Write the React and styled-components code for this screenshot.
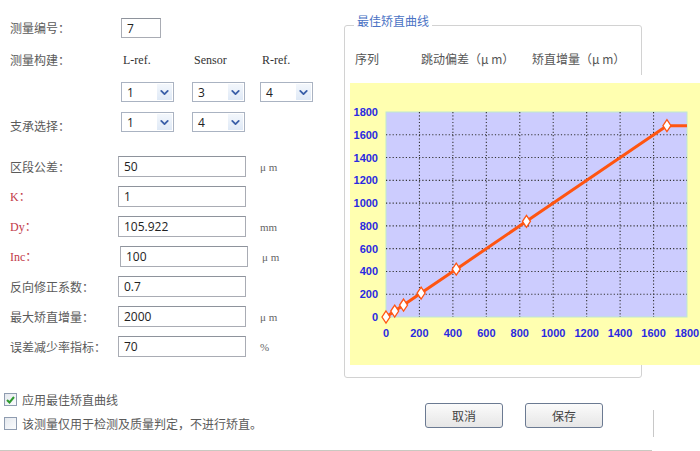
import React from 'react';
import styled, { createGlobalStyle } from 'styled-components';
import { ChevronDown } from 'lucide-react';

const GlobalStyle = createGlobalStyle`
  html, body { margin: 0; padding: 0; background: #fff; }
  body { font-family: "Noto Sans CJK SC", "Liberation Sans", sans-serif; }
`;

const Screen = styled.div`
  width: 700px;
  height: 451px;
  overflow: hidden;
  background: #fff;
  font-family: "Noto Sans CJK SC", "Liberation Sans", sans-serif;
`;

const Main = styled.div`
  display: flex;
  height: 380px;
`;

const Form = styled.div`
  width: 344px;
  flex: none;
  padding-left: 10px;
  box-sizing: border-box;
  display: flex;
  flex-direction: column;
`;

const Row = styled.div`
  display: flex;
  align-items: center;
  height: ${p => p.$h || 21}px;
  margin-top: ${p => p.$mt || 0}px;
`;

const Label = styled.div`
  width: 108px;
  flex: none;
  font-size: 12px;
  line-height: 16px;
  color: ${p => (p.$red ? '#c23a48' : '#5a5a5a')};
  font-family: ${p => (p.$latin ? '"Liberation Serif", "Noto Sans CJK SC", serif' : '"Noto Sans CJK SC", sans-serif')};
  padding-top: ${p => p.$shift || 0}px;
`;

const Cells = styled.div`
  display: grid;
  grid-template-columns: 71px 68px 53px;
  margin-left: 3px;
  align-items: center;
`;

const ColHead = styled.div`
  font-family: "Liberation Serif", serif;
  font-size: 12px;
  color: #333;
  padding-left: 2px;
`;

const TextBox = styled.input`
  box-sizing: border-box;
  width: ${p => p.$w || 128}px;
  height: ${p => p.$h || 21}px;
  margin-left: ${p => p.$ml || 0}px;
  border: 1px solid #a9acb4;
  border-top-color: #8e939c;
  background: #fff;
  padding: 0 0 0 5px;
  font-family: "Open Sans", "Liberation Sans", sans-serif;
  font-size: 12px;
  color: #222;
  outline: none;
`;

const Unit = styled.span`
  margin-left: 14px;
  font-family: "Liberation Serif", serif;
  font-size: 11px;
  color: #666;
`;

const SelectBox = styled.div`
  box-sizing: border-box;
  width: 53px;
  height: 20px;
  border: 1px solid #aab3c2;
  background: #fff;
  display: flex;
  align-items: center;
  justify-content: space-between;
  padding-left: 5px;
  font-family: "Open Sans", "Liberation Sans", sans-serif;
  font-size: 12px;
  color: #222;
`;

const DropBtn = styled.span`
  width: 15px;
  height: 16px;
  margin-right: 1px;
  display: flex;
  align-items: center;
  justify-content: center;
  background: linear-gradient(#f3f7fc, #dfe9f6);
  color: #3a5fa8;
`;

const Select = ({ value }) => (
  <SelectBox>
    <span>{value}</span>
    <DropBtn>
      <ChevronDown size={13} strokeWidth={3.4} />
    </DropBtn>
  </SelectBox>
);

const GroupBox = styled.div`
  position: relative;
  box-sizing: border-box;
  width: 298px;
  height: 353px;
  margin-top: 25px;
  border: 1px solid #d2d2d2;
  border-radius: 3px;
  padding-left: 10px;
`;

const Legend = styled.span`
  position: absolute;
  top: -13px;
  left: 9px;
  padding: 0 3px;
  background: #fff;
  font-size: 12px;
  line-height: 16px;
  color: #4a72c4;
`;

const HeadRow = styled.div`
  display: grid;
  grid-template-columns: 66px 111px auto;
  margin-top: 24px;
  height: 16px;
  align-items: center;
  font-size: 12px;
  color: #555;
  white-space: nowrap;
`;

const ChartWrap = styled.div`
  width: 350px;
  height: 282px;
  margin-top: 9px;
  margin-left: -5px;
  border-top: 8px solid #fff;
  background: #ffffb0;
`;

const Footer = styled.div`
  display: flex;
  height: 70px;
  padding-left: 4px;
`;

const CheckCol = styled.div`
  width: 421px;
  flex: none;
  padding-top: 13px;
  display: flex;
  flex-direction: column;
  gap: 11px;
`;

const CheckItem = styled.div`
  display: flex;
  align-items: center;
  gap: 5px;
  font-size: 12px;
  color: #5a5a5a;
  height: 13px;
`;

const Box = styled.span`
  box-sizing: border-box;
  width: 13px;
  height: 13px;
  border: 1px solid #8f9cb0;
  background: linear-gradient(135deg, #e4e8ee, #fbfcfd);
  display: flex;
  align-items: center;
  justify-content: center;
`;

const Buttons = styled.div`
  display: flex;
  gap: 22px;
  padding-top: 23px;
  align-items: flex-start;
`;

const Button = styled.button`
  box-sizing: border-box;
  width: 78px;
  height: 25px;
  border: 1px solid #6b7a92;
  border-radius: 3px;
  background: linear-gradient(#fbfbfb, #e6e6e6);
  font-family: "Noto Sans CJK SC", sans-serif;
  font-size: 12px;
  color: #444;
  padding: 0;
`;

const VLine = styled.div`
  width: 1px;
  height: 27px;
  margin-top: 30px;
  margin-left: 50px;
  background: #c8c8c8;
`;

const BottomRule = styled.div`
  width: 652px;
  height: 1px;
  background: #c9c9c1;
`;

const X0 = 36, X1 = 337, Y0 = 234, Y1 = 29;
const sx = v => X0 + (v / 1800) * (X1 - X0);
const sy = v => Y0 - (v / 1800) * (Y0 - Y1);
const ticks = [0, 200, 400, 600, 800, 1000, 1200, 1400, 1600, 1800];
const pts = [0, 52, 105, 210, 420, 840, 1680];

const Chart = () => (
  <svg width="350" height="282" viewBox="0 0 350 282" style={{ display: 'block' }}>
    <rect x={X0} y={Y1} width={X1 - X0} height={Y0 - Y1} fill="#ccccfe" stroke="#bfe8cf" strokeWidth="1" />
    {ticks.slice(1, -1).map(t => (
      <g key={t}>
        <line x1={sx(t)} y1={Y1} x2={sx(t)} y2={Y0} stroke="#333" strokeWidth="1.1" strokeDasharray="1.2 2.1" />
        <line x1={X0} y1={sy(t)} x2={X1} y2={sy(t)} stroke="#333" strokeWidth="1.1" strokeDasharray="1.2 2.1" />
      </g>
    ))}
    {ticks.map(t => (
      <text key={'y' + t} x="28" y={sy(t) + 4} textAnchor="end" fontFamily="Liberation Sans, Arial, sans-serif" fontSize="11" fontWeight="bold" fill="#2a2ae0">{t}</text>
    ))}
    {ticks.map(t => (
      <text key={'x' + t} x={sx(t)} y="254" textAnchor="middle" fontFamily="Liberation Sans, Arial, sans-serif" fontSize="11" fontWeight="bold" fill="#2a2ae0">{t}</text>
    ))}
    <polyline
      points={[...pts.map(p => `${sx(p)},${sy(p)}`), `${sx(1800)},${sy(1680)}`].join(' ')}
      fill="none" stroke="#ff5511" strokeWidth="3" strokeLinejoin="round"
    />
    {pts.map(p => {
      const cx = sx(p), cy = sy(p);
      return (
        <polygon key={'m' + p} points={`${cx},${cy - 6} ${cx + 4},${cy} ${cx},${cy + 6} ${cx - 4},${cy}`} fill="#fff" stroke="#ff5511" strokeWidth="1.3" />
      );
    })}
  </svg>
);

const fields = [
  { label: '区段公差：', value: '50', unit: 'μ m' },
  { label: 'K：', value: '1', red: true },
  { label: 'Dy：', value: '105.922', unit: 'mm', red: true },
  { label: 'Inc：', value: '100', unit: 'μ m', red: true, ml: 2 },
  { label: '反向修正系数：', value: '0.7' },
  { label: '最大矫直增量：', value: '2000', unit: 'μ m' },
  { label: '误差减少率指标：', value: '70', unit: '%' },
];

export default function App() {
  return (
    <Screen>
      <GlobalStyle />
      <Main>
        <Form>
          <Row $mt={18} $h={20}>
            <Label>测量编号：</Label>
            <TextBox $w={40} $h={20} $ml={3} readOnly value="7" />
          </Row>
          <Row $mt={14} $h={16}>
            <Label>测量构建：</Label>
            <Cells>
              <ColHead>L-ref.</ColHead>
              <ColHead>Sensor</ColHead>
              <ColHead>R-ref.</ColHead>
            </Cells>
          </Row>
          <Row $mt={14} $h={20}>
            <Label />
            <Cells>
              <Select value="1" />
              <Select value="3" />
              <Select value="4" />
            </Cells>
          </Row>
          <Row $mt={10} $h={20}>
            <Label $shift={8}>支承选择：</Label>
            <Cells>
              <Select value="1" />
              <Select value="4" />
            </Cells>
          </Row>
          {fields.map((f, i) => (
            <Row key={f.label} $mt={i === 0 ? 24 : 9}>
              <Label $red={f.red} $latin={f.red}>{f.label}</Label>
              <TextBox $ml={f.ml} readOnly value={f.value} />
              {f.unit && <Unit>{f.unit}</Unit>}
            </Row>
          ))}
        </Form>
        <GroupBox>
          <Legend>最佳矫直曲线</Legend>
          <HeadRow>
            <span>序列</span>
            <span>跳动偏差（μ m）</span>
            <span>矫直增量（μ m）</span>
          </HeadRow>
          <ChartWrap>
            <Chart />
          </ChartWrap>
        </GroupBox>
      </Main>
      <Footer>
        <CheckCol>
          <CheckItem>
            <Box>
              <svg width="9" height="8" viewBox="0 0 9 8">
                <path d="M1 4 L3.5 6.5 L8 1" fill="none" stroke="#2f9a2f" strokeWidth="2" />
              </svg>
            </Box>
            应用最佳矫直曲线
          </CheckItem>
          <CheckItem>
            <Box />
            该测量仅用于检测及质量判定，不进行矫直。
          </CheckItem>
        </CheckCol>
        <Buttons>
          <Button>取消</Button>
          <Button>保存</Button>
        </Buttons>
        <VLine />
      </Footer>
      <BottomRule />
    </Screen>
  );
}
